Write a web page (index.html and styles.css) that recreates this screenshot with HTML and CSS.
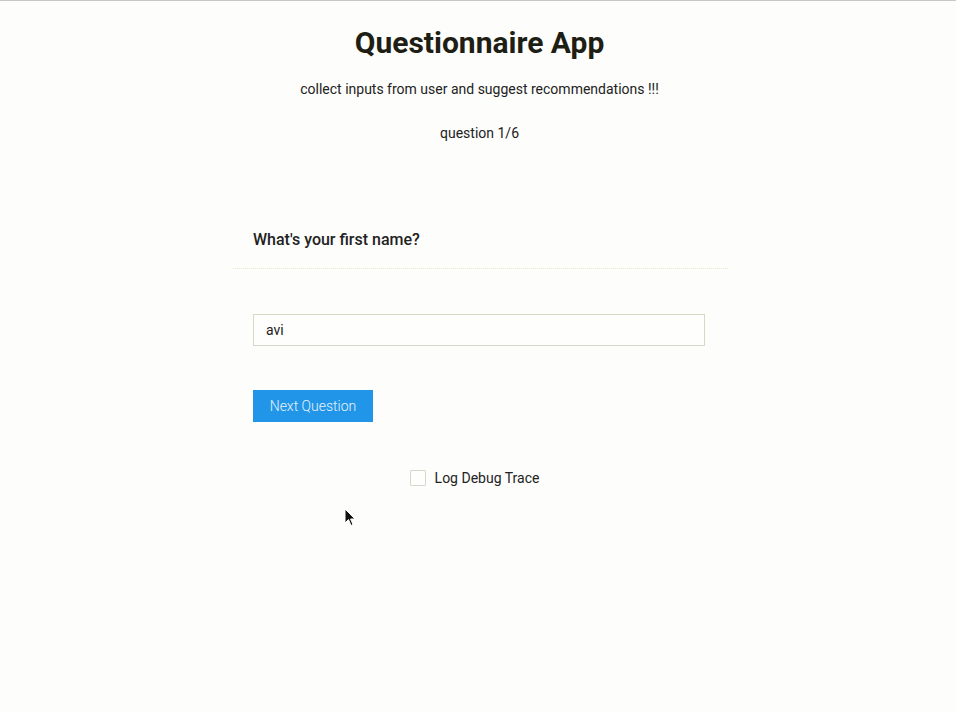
FILE: index.html
```html
<!DOCTYPE html>
<html>
<head>
<meta charset="utf-8">
<link rel="stylesheet" href="styles.css">
</head>
<body>
<div class="page">
  <header class="head">
    <h1 class="title">Questionnaire App</h1>
    <p class="sub">collect inputs from user and suggest recommendations !!!</p>
    <p class="count">question 1/6</p>
  </header>
  <section class="card">
    <div class="q">What's your first name?</div>
    <div class="body">
      <input class="field" type="text" value="avi">
      <button class="btn">Next Question</button>
    </div>
  </section>
  <label class="debug"><span class="box"></span><span>Log Debug Trace</span></label>
</div>
<svg class="cursor" width="12" height="20" viewBox="0 0 12 20"><path d="M1 1 L1 15 L4.5 11.5 L7 17.5 L9 16.6 L6.6 11 L11 11 Z" fill="#111" stroke="#fff" stroke-width="1"/></svg>
</body>
</html>
```
FILE: styles.css
```css
html, body { margin: 0; padding: 0; }
body {
  background: #fdfdfb;
  font-family: Roboto, "Noto Sans", sans-serif;
  color: #222;
  border-top: 1px solid #c8c8c8;
  height: 711px;
  position: relative;
  overflow: hidden;
}
.page { display: flex; flex-direction: column; align-items: center; padding-left: 3px; }
.head { display: flex; flex-direction: column; align-items: center; }
.title { font-size: 30px; font-weight: 700; margin: 24px 0 0; line-height: 36px; color: #1e1e14; }
.sub { font-size: 14px; margin: 18px 0 0; line-height: 20px; }
.count { font-size: 14px; margin: 24px 0 0; line-height: 20px; }
.card { width: 495px; margin-top: 87px; margin-left: 2px; }
.q { font-size: 16px; font-weight: 500; padding: 0 20px; line-height: 20px; height: 38px; border-bottom: 1px dotted #e8e8c8; }
.body { padding: 45px 20px 0; display: flex; flex-direction: column; align-items: flex-start; }
.field {
  box-sizing: border-box; width: 452px; height: 32px; border: 1px solid #d8d8c8; background: #fefefc;
  font-family: Roboto, sans-serif; font-size: 14px; color: #222; padding: 0 12px; outline: none;
}
.btn {
  margin-top: 44px; width: 120px; height: 32px; border: none; background: #2196e8; color: #e8f2fc;
  font-family: Roboto, sans-serif; font-size: 14px; font-weight: 300; padding: 0;
}
.debug { display: flex; align-items: center; gap: 9px; font-size: 14px; margin-top: 48px; margin-right: 10px; }
.box { width: 14px; height: 14px; border: 1px solid #d8d8c8; background: #fefefc; border-radius: 1px; }
.cursor { position: absolute; left: 344px; top: 507px; }
```
